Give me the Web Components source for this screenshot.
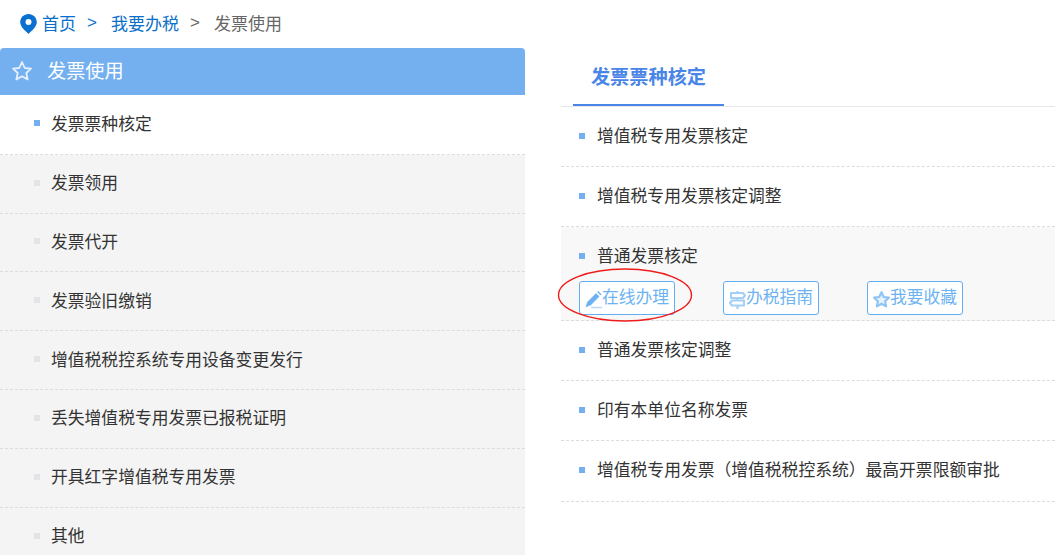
<!DOCTYPE html>
<html lang="zh-CN"><head><meta charset="utf-8"><title>发票使用</title>
<style>
html,body{margin:0;padding:0;background:#fff;height:555px;overflow:hidden}
body{font:16.8px "Noto Sans CJK SC","Liberation Sans",sans-serif;color:#333}
</style></head><body>
<tax-page>
  <bread-crumb slot="crumb"></bread-crumb>
  <side-menu slot="side" title-text="发票使用" items="发票票种核定|发票领用|发票代开|发票验旧缴销|增值税税控系统专用设备变更发行|丢失增值税专用发票已报税证明|开具红字增值税专用发票|其他"></side-menu>
  <service-panel slot="main"></service-panel>
</tax-page>
<script>
const el=(name,html)=>customElements.define(name,class extends HTMLElement{
  constructor(){super();this.attachShadow({mode:'open'}).innerHTML=html}
});
el('tax-page',`<style>:host{display:block;width:1055px;height:555px;overflow:hidden}
.body{display:flex;align-items:flex-start;gap:36px}.s{flex:0 0 525px}.m{flex:1;min-width:0}</style>
<slot name="crumb"></slot><div class="body"><div class="s"><slot name="side"></slot></div><div class="m"><slot name="main"></slot></div></div>`);

el('bread-crumb',`<style>:host{display:flex;align-items:center;height:48px;padding-left:20px;box-sizing:border-box;font-size:17px;color:#666;line-height:24px}
svg{width:17px;height:20px;margin-right:5px;flex:none}
a,span{padding-bottom:3px}
a{color:#0a6fc9}.sep{width:10px;margin:0 14px 0 11px;font-family:"Liberation Sans",sans-serif;padding-bottom:2px}.sep.b{color:#0a6fc9}</style>
<svg viewBox="0 0 17 20"><path fill="#0a70d0" fill-rule="evenodd" d="M8.500 0C3.900 0 .2 3.600.2 8.100c0 4.700 4.800 8.500 8.300 11.900 3.500-3.400 8.300-7.200 8.300-11.900C16.800 3.600 13.100 0 8.500 0zm0 5a3 3 0 1 1 0 6 3 3 0 0 1 0-6z"/></svg>
<a>首页</a><span class="sep b">&gt;</span><a>我要办税</a><span class="sep">&gt;</span><span>发票使用</span>`);

customElements.define('side-menu',class extends HTMLElement{
  constructor(){super();this.attachShadow({mode:'open'})}
  connectedCallback(){
    const items=this.getAttribute('items').split('|');
    this.shadowRoot.innerHTML=`<style>:host{display:block}
    .h{height:47px;background:#74b0f0;border-radius:4px 4px 0 0;color:#fff;display:flex;align-items:center;padding-left:11px;font-size:19.2px}
    .h svg{width:22px;height:22px;margin-right:14px;flex:none;position:relative;top:-1px}
    .h span{padding-bottom:3px}
    .list{background:#f4f4f4}
    .i{display:flex;align-items:center;height:58.8px;box-sizing:border-box;border-bottom:1px dashed #dcdcdc;padding-left:34px;font-size:16.8px;color:#333}
    .i span{padding-bottom:3px}
    .i:last-child{border-bottom:0}
    .i::before{content:"";width:6px;height:6px;background:#e3e3e8;margin-right:11px;position:relative;top:-1px}
    .i.on{background:#fff;height:59.800px}.i.on::before{background:#74b0f0}
    </style>
    <div class="h"><svg viewBox="0 0 22 22"><path fill="none" stroke="#e4f0fc" stroke-width="1.800" stroke-linejoin="round" d="M11 2l2.700 6 6.300.7-4.700 4.300 1.300 6.400L11 16.200l-5.600 3.200 1.300-6.400L2 8.700 8.300 8z"/></svg><span>${this.getAttribute('title-text')}</span></div>
    <div class="list">${items.map((t,i)=>`<div class="i${i==0?' on':''}"><span>${t}</span></div>`).join('')}</div>`;
  }
});

el('action-btn',`<style>:host{display:inline-flex;align-items:center;box-sizing:border-box;width:96px;height:34px;border:1px solid #62aef2;border-radius:3px;color:#6db3f2;font-size:16.8px;padding-left:5px;white-space:nowrap;background:#fff}
span{padding-bottom:5px}
::slotted(svg){width:17px;height:18px;flex:none;margin-top:3px}</style><slot name="icon"></slot><span><slot></slot></span>`);

el('service-row',`<style>:host{display:block;box-sizing:border-box;border-bottom:1px dashed #dcdcdc;font-size:16.8px;color:#333}
.t{display:flex;align-items:center;height:59px;padding-left:18px}
.t::before{content:"";width:6px;height:6px;background:#74b0f0;margin-right:12px;position:relative;top:-1px}
.t span{padding-bottom:4px}
:host([open]){background:#f8f8f8}
:host([last]) .t{height:60px}
::slotted(action-group){margin-top:-5px}
</style><div class="t"><span><slot name="title"></slot></span></div><slot></slot>`);

el('action-group',`<style>:host{display:flex;gap:48px;padding-left:18px;height:39px;position:relative}
svg{position:absolute;left:-6px;top:-15px;width:140px;height:58px;pointer-events:none;overflow:visible}</style>
<slot></slot><svg viewBox="0 0 140 58"><ellipse cx="70" cy="29" rx="66.500" ry="26" fill="none" stroke="#ee1c1c" stroke-width="1.400"/></svg>`);

el('service-panel',`<style>:host{display:block}
.tabs{border-bottom:1px solid #e8e8e8;padding-left:12px;height:58px}
.tab{width:151px;height:58px;box-sizing:border-box;border-bottom:2px solid #4a86e8;color:#4a86e8;font-weight:700;font-size:19.2px;display:flex;align-items:center;justify-content:center;padding-bottom:1px}
</style><div class="tabs"><div class="tab">发票票种核定</div></div><slot></slot>`);
</script>
<script>
document.querySelector('service-panel').innerHTML=`
<service-row><span slot="title">增值税专用发票核定</span></service-row>
<service-row><span slot="title">增值税专用发票核定调整</span></service-row>
<service-row open><span slot="title">普通发票核定</span>
<action-group>
<action-btn><svg slot="icon" viewBox="0 0 17 18"><path fill="#6db3f2" d="M11 2.200l3.400 3.200-8.600 8.800-5.300 2 1.700-5.200zM12.200 1l1-1 3.400 3.200-1.100 1.100z"/><rect x="6" y="15.800" width="11" height="1.400" fill="#b6d8f7"/></svg>在线办理</action-btn>
<action-btn><svg slot="icon" viewBox="0 0 17 18"><g fill="none" stroke="#a4cff6" stroke-width="2.200" stroke-linejoin="round"><path d="M8.500 0v2M8.500 7v2.500M8.500 14.500V18"/><path d="M2 2h12l2 2.500L14 7H2z"/><path d="M15 9.500H3L1 12l2 2.500h12z"/></g></svg>办税指南</action-btn>
<action-btn><svg slot="icon" viewBox="0 0 17 18"><path fill="#e6f2fd" stroke="#8fc4f5" stroke-width="2.200" stroke-linejoin="round" d="M8.500 1.200l2.200 4.800 5.200.7-3.800 3.500 1 5.200-4.600-2.600-4.600 2.600 1-5.200L1.100 6.700l5.200-.7z"/></svg>我要收藏</action-btn>
</action-group>
</service-row>
<service-row><span slot="title">普通发票核定调整</span></service-row>
<service-row><span slot="title">印有本单位名称发票</span></service-row>
<service-row last><span slot="title">增值税专用发票（增值税税控系统）最高开票限额审批</span></service-row>`;
</script>
</body></html>
